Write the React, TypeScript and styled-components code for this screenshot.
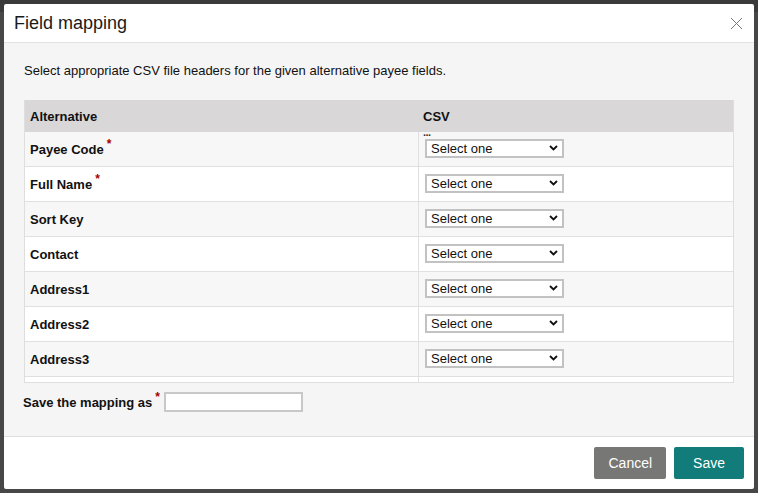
import React from "react";
import styled, { createGlobalStyle } from "styled-components";

const GlobalStyle = createGlobalStyle`
  html, body {
    margin: 0;
    padding: 0;
  }
  body {
    font-family: "Liberation Sans", Arial, Helvetica, sans-serif;
    color: #111;
  }
  * {
    box-sizing: border-box;
  }
`;

const fields = [
  { name: "Payee Code", required: true },
  { name: "Full Name", required: true },
  { name: "Sort Key" },
  { name: "Contact" },
  { name: "Address1" },
  { name: "Address2" },
  { name: "Address3" },
];

const Backdrop = styled.div`
  height: 493px;
  padding: 4px;
  background: linear-gradient(#3a3a3a 0 12px, #474747 12px);
`;

const Modal = styled.div`
  height: 485px;
  display: flex;
  flex-direction: column;
  background: #fff;
  border-radius: 2px;
  overflow: hidden;
`;

const Header = styled.div`
  height: 39px;
  flex: none;
  display: flex;
  align-items: center;
  justify-content: space-between;
  padding: 0 11px 0 10px;
  border-bottom: 1px solid #e2e2e2;
`;

const Title = styled.h1`
  margin: 0;
  font-size: 18px;
  font-weight: 400;
  color: #1a1a1a;
`;

const CloseButton = styled.button`
  width: 14px;
  height: 14px;
  padding: 0;
  border: 0;
  background: none;
  display: flex;
  align-items: center;
  justify-content: center;
  cursor: pointer;
`;

const Body = styled.div`
  flex: 1;
  background: #f5f5f5;
  padding: 20px 20px 0;
`;

const Intro = styled.p`
  margin: 0 0 21px;
  font-size: 13px;
  line-height: 16px;
`;

const TableWrap = styled.div`
  height: 283px;
  overflow: hidden;
  border: 1px solid #dedede;
  border-top: 0;
`;

const Row = styled.div<{ $striped?: boolean }>`
  display: grid;
  grid-template-columns: 393px 1fr;
  height: 35px;
  border-bottom: 1px solid #e0e0e0;
  background: ${(p) => (p.$striped ? "#f7f7f7" : "#fff")};
`;

const HeadRow = styled.div`
  display: grid;
  grid-template-columns: 393px 1fr;
  height: 32px;
  background: #d9d7d8;
`;

const HeadCell = styled.div`
  position: relative;
  display: flex;
  align-items: center;
  padding-left: 5px;
  font-size: 13px;
  font-weight: 700;
`;

const Dots = styled.span`
  position: absolute;
  left: 5px;
  bottom: -4px;
  font-size: 11px;
  font-weight: 700;
  line-height: 8px;
  letter-spacing: -0.5px;
  color: #333;
  z-index: 1;
`;

const LabelCell = styled.div`
  display: flex;
  align-items: center;
  padding-left: 5px;
  font-size: 13px;
  font-weight: 700;
`;

const InputCell = styled.div`
  display: flex;
  align-items: flex-start;
  padding: 7px 0 0 6px;
  border-left: 1px solid #e0e0e0;
`;

const Required = styled.span`
  color: #a50000;
  font-size: 12px;
  font-weight: 700;
  line-height: 1;
  margin-left: 3px;
  position: relative;
  top: -5px;
`;

const SelectBox = styled.div`
  position: relative;
  width: 139px;
  height: 19px;
`;

const Select = styled.select`
  appearance: none;
  width: 100%;
  height: 100%;
  margin: 0;
  padding: 0 0 0 4px;
  border: 2px solid #c2c2c2;
  border-radius: 0;
  background: #fff;
  font-family: inherit;
  font-size: 13px;
  color: #111;
  outline: none;
`;

const Chevron = styled.svg`
  position: absolute;
  right: 6px;
  top: 6px;
  pointer-events: none;
`;

const SaveRow = styled.div`
  display: flex;
  align-items: center;
  margin-top: 9px;
  height: 20px;
  margin-left: -1px;
`;

const SaveLabel = styled.label`
  font-size: 13px;
  font-weight: 700;
  display: flex;
  align-items: center;
`;

const NameInput = styled.input`
  width: 139px;
  height: 20px;
  margin: 0 0 0 4px;
  border: 2px solid #c8c8c8;
  background: #fff;
  outline: none;
`;

const Footer = styled.div`
  flex: none;
  height: 53px;
  display: flex;
  justify-content: flex-end;
  align-items: center;
  gap: 8px;
  padding-right: 10px;
  border-top: 1px solid #dedede;
`;

const Button = styled.button<{ $primary?: boolean }>`
  height: 32px;
  padding: 0 ${(p) => (p.$primary ? "19px" : "14px")};
  border: 0;
  border-radius: 2px;
  font-family: inherit;
  font-size: 14px;
  color: #fff;
  background: ${(p) => (p.$primary ? "#117c79" : "#777775")};
  cursor: pointer;
`;

const SelectField = () => (
  <SelectBox>
    <Select defaultValue="">
      <option value="">Select one</option>
    </Select>
    <Chevron width="9" height="6" viewBox="0 0 9 6">
      <path d="M1 1l3.5 3.5L8 1" fill="none" stroke="#111" strokeWidth="1.8" />
    </Chevron>
  </SelectBox>
);

export default function App() {
  return (
    <>
      <GlobalStyle />
      <Backdrop>
        <Modal>
          <Header>
            <Title>Field mapping</Title>
            <CloseButton aria-label="Close">
              <svg width="13" height="13" viewBox="0 0 13 13">
                <path d="M1 1l11 11M12 1L1 12" stroke="#777" strokeWidth="1" />
              </svg>
            </CloseButton>
          </Header>
          <Body>
            <Intro>Select appropriate CSV file headers for the given alternative payee fields.</Intro>
            <TableWrap>
              <HeadRow>
                <HeadCell>Alternative</HeadCell>
                <HeadCell>
                  CSV
                  <Dots>...</Dots>
                </HeadCell>
              </HeadRow>
              {fields.map((f, i) => (
                <Row key={f.name} $striped={i % 2 === 0}>
                  <LabelCell>
                    {f.name}
                    {f.required && <Required>*</Required>}
                  </LabelCell>
                  <InputCell>
                    <SelectField />
                  </InputCell>
                </Row>
              ))}
              {/* next row, scrolled out of view */}
              <Row>
                <LabelCell />
                <InputCell />
              </Row>
            </TableWrap>
            <SaveRow>
              <SaveLabel>
                Save the mapping as
                <Required>*</Required>
              </SaveLabel>
              <NameInput type="text" />
            </SaveRow>
          </Body>
          <Footer>
            <Button>Cancel</Button>
            <Button $primary>Save</Button>
          </Footer>
        </Modal>
      </Backdrop>
    </>
  );
}
